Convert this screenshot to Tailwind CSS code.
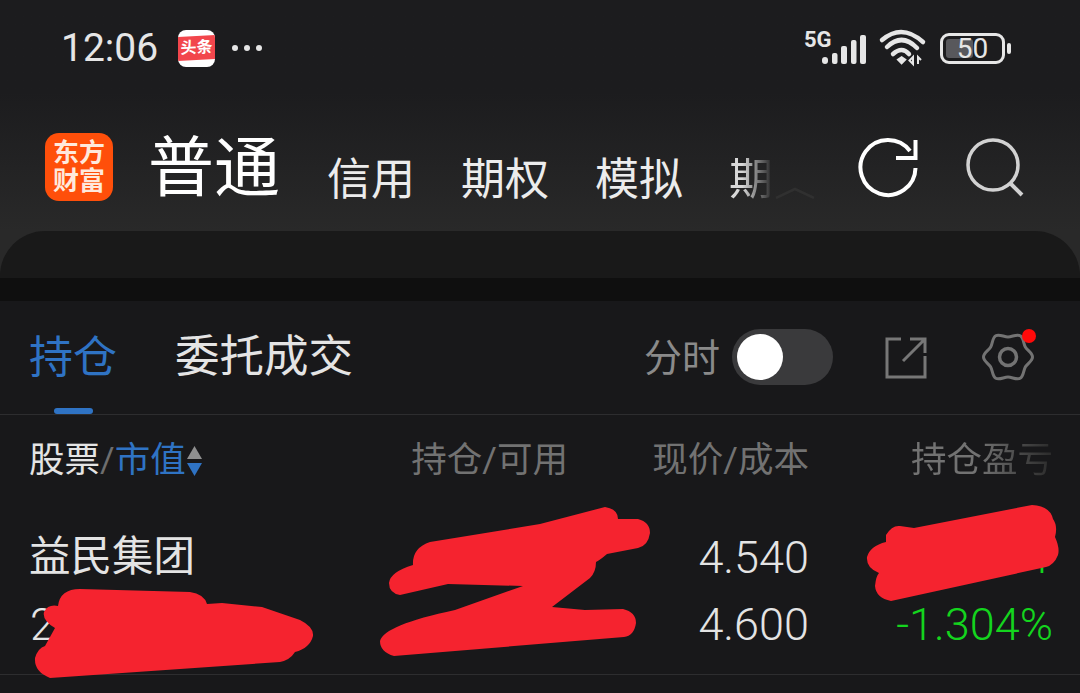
<!DOCTYPE html>
<html lang="zh-CN">
<head>
    <meta charset="UTF-8">
    <meta name="viewport" content="width=device-width, initial-scale=1.0">
    <title>持仓</title>
    <script src="https://cdn.jsdelivr.net/npm/@tailwindcss/browser@4"></script>
</head>
<body class="bg-[#18181a]">
<div class="relative w-[1080px] h-[693px] overflow-hidden bg-[#18181a] font-['Roboto','Noto_Sans_CJK_SC',sans-serif]">

    <!-- top -->
    <header class="h-[231px] bg-gradient-to-b from-[#1c1c1e] from-40% to-[#292929]">
        <div class="h-[96px] pl-[61px] pr-[69px] flex items-center justify-between">
            <div class="flex items-center">
                <span class="text-[39px] leading-none text-[#e6e6e6] w-[117px]">12:06</span>
                <div class="w-[37px] h-[37px] rounded-[8px] bg-white flex items-center justify-center overflow-hidden">
                    <div class="w-full h-[24px] bg-[#f2464c] -skew-y-3 text-white text-[16px] font-bold leading-[24px] text-center">头条</div>
                </div>
                <div class="flex gap-[6px] ml-[17px]">
                    <span class="w-[6px] h-[6px] rounded-full bg-[#e6e6e6]"></span>
                    <span class="w-[6px] h-[6px] rounded-full bg-[#e6e6e6]"></span>
                    <span class="w-[6px] h-[6px] rounded-full bg-[#e6e6e6]"></span>
                </div>
            </div>
            <div class="flex items-center">
                <div class="relative w-[61px] h-[34px]">
                    <span class="absolute -left-[1px] -top-[1px] text-[22px] leading-[20px] font-bold text-[#e6e6e6]">5G</span>
                    <svg class="absolute left-0 top-0" width="61" height="34" viewBox="0 0 61 34" fill="#e6e6e6">
                        <rect x="17" y="26" width="6" height="7" rx="3"/>
                        <rect x="27" y="22" width="5.5" height="11" rx="2"/>
                        <rect x="36" y="15" width="6" height="18" rx="2"/>
                        <rect x="46" y="9" width="5.5" height="24" rx="2"/>
                        <rect x="55" y="4" width="6" height="29" rx="2"/>
                    </svg>
                </div>
                <svg class="ml-[11px] overflow-visible" width="48" height="36" viewBox="0 0 48 36" fill="none" stroke="#e6e6e6" stroke-width="4.5" stroke-linecap="round">
                    <path d="M5 10 Q25 -7 46 12"/>
                    <path d="M10 17 Q25 2.5 40 18"/>
                    <path d="M16 24 Q25 16 32 24"/>
                    <path d="M24.6 27 L28.6 29.6 L24.6 33.6 L20.6 29.6 Z" fill="#e6e6e6" stroke-width="1.5"/>
                    <path d="M36 27 v7 l-3.5 -3.5 z M41 34 v-7 l3 3" stroke-width="2" stroke-linecap="butt"/>
                </svg>
                <div class="ml-[15px] relative w-[65px] h-[31px] border-[3px] border-[#e6e6e6] rounded-[9px] p-[3px]">
                    <div class="w-[27px] h-full rounded-[3px] bg-[#58585c]"></div>
                    <span class="absolute inset-0 text-center text-[28px] leading-[25px] text-[#e6e6e6]">50</span>
                </div>
                <span class="ml-[2px] w-[4px] h-[11px] rounded-[2px] bg-[#e6e6e6]"></span>
            </div>
        </div>

        <nav class="relative mt-[32px] h-[78px] pl-[45px] flex items-center text-white">
            <div class="w-[68px] h-[68px] rounded-[14px] bg-[#ff4f0a] text-[#ffe9dc] text-[26px] font-bold leading-[28px] text-center pt-[6px]">东方<br>财富</div>
            <span class="ml-[35px] mt-[3px] text-[66px] leading-none">普通</span>
            <div class="flex items-end self-end -mb-[2px] text-[44px] leading-[56px] text-[#ececec]">
                <span class="ml-[47px]">信用</span>
                <span class="ml-[46px]">期权</span>
                <span class="ml-[46px]">模拟</span>
                <span class="ml-[46px] bg-gradient-to-r from-[#d8d8d8] to-transparent from-30% bg-clip-text text-transparent w-[44px]">期</span>
                <svg class="mb-[9px] ml-[2px]" width="40" height="12" viewBox="0 0 40 12" fill="none" stroke="#303030" stroke-width="2.5"><path d="M1 11 L20 2 L39 11"/></svg>
            </div>
            <svg class="absolute left-[857px] top-[9px]" width="62" height="62" viewBox="0 0 62 62" fill="none" stroke="#fff" stroke-width="4">
                <path d="M58.5 31 A27.5 27.5 0 1 1 53 14"/>
                <path d="M39 21 H58.5 V3"/>
            </svg>
            <svg class="absolute left-[964px] top-[9px]" width="62" height="62" viewBox="0 0 62 62" fill="none" stroke="#d2d2d2" stroke-width="3.5">
                <circle cx="29" cy="28" r="25"/>
                <path d="M46 46 L58 58" stroke-width="4"/>
            </svg>
        </nav>
    </header>

    <!-- empty card -->
    <div class="h-[47px] bg-[#292929]">
        <div class="h-full rounded-t-[45px] bg-[#191919]"></div>
    </div>
    <div class="h-[23px] bg-[#0f0f0f]"></div>

    <!-- holdings -->
    <section>
        <div class="h-[114px] pl-[29px] flex items-center border-b border-[#2d2d2f] relative">
            <span class="text-[44px] leading-none text-[#2f73c4]">持仓</span>
            <span class="ml-[58px] text-[44.5px] leading-none text-[#e4e4e4]">委托成交</span>
            <span class="absolute left-[54px] bottom-0 w-[39px] h-[6px] rounded-full bg-[#2f73c4]"></span>

            <span class="ml-[291px] text-[38px] leading-none text-[#8a8a8a]">分时</span>
            <div class="ml-[12px] mb-[2px] w-[101px] h-[56px] rounded-full bg-[#3a3a3c] p-[5px]">
                <div class="w-[46px] h-[46px] rounded-full bg-white"></div>
            </div>
            <svg class="ml-[51px]" width="44" height="44" viewBox="0 0 44 44" fill="none" stroke="#777" stroke-width="3">
                <path d="M17 3 H3 V41 H41 V20"/>
                <path d="M19 25 L41 3 M26 3 H41 V17"/>
            </svg>
            <div class="relative ml-[54px] mb-[2px] w-[52px] h-[52px]">
                <svg width="52" height="52" viewBox="0 0 52 52" fill="none" stroke="#737373" stroke-width="3">
                    <path d="M50.5 26 C50.5 30 45.32 32.54 43.32 36 S41.71 45.22 38.25 47.22 S30 46 26 46 S17.21 49.22 13.75 47.22 S10.68 39.46 8.68 36 S1.5 30 1.5 26 S6.68 19.46 8.68 16 S10.29 6.78 13.75 4.78 S22 6 26 6 S34.79 2.78 38.25 4.78 S41.32 12.54 43.32 16 S50.5 22 50.5 26 Z"/>
                    <circle cx="26" cy="26" r="8.5" stroke-width="3.5"/>
                </svg>
                <span class="absolute -right-[2px] -top-[2px] w-[14px] h-[14px] rounded-full bg-[#ff0a0a]"></span>
            </div>
        </div>

        <div class="grid grid-cols-[300px_238px_241px_244px] pl-[30px] pr-[27px]">
            <div class="h-[91px] -ml-[1px] flex items-center text-[35.5px] leading-none text-[#e4e4e4]">
                <span>股票</span><span class="text-[#6e6e6e]">/</span><span class="text-[#2f73c4]">市值</span>
                <svg width="17" height="32" viewBox="0 0 17 32"><path d="M8.5 1 L16 14 H1 Z" fill="#8f8f8f"/><path d="M8.5 31 L16 18 H1 Z" fill="#2f73c4"/></svg>
            </div>
            <div class="h-[91px] flex items-center justify-end text-[35.5px] leading-none text-[#727272]">持仓/可用</div>
            <div class="h-[91px] flex items-center justify-end text-[35.5px] leading-none text-[#727272]">现价/成本</div>
            <div class="h-[91px] flex items-center justify-end text-[35.5px] leading-none bg-gradient-to-r from-[#727272] from-70% to-[#2a2a2a] bg-clip-text text-transparent">持仓盈亏</div>

            <div class="-ml-[1px] text-[41.5px] leading-none text-[#e4e4e4] pt-[30px]">益民集团</div>
            <div></div>
            <div class="text-[45px] leading-none text-[#e4e4e4] text-right pt-[29px] font-light">4.540</div>
            <div class="text-[45px] leading-none text-[#14d41e] text-right pt-[29px] font-light">1</div>

            <div class="text-[45px] leading-none text-[#e4e4e4] pt-[22px] pb-[27px] font-light">2</div>
            <div></div>
            <div class="text-[45px] leading-none text-[#e4e4e4] text-right pt-[22px] pb-[27px] font-light">4.600</div>
            <div class="text-[45px] leading-none text-[#14d41e] text-right pt-[22px] pb-[27px] font-light">-1.304%</div>
        </div>
        <div class="border-b border-[#2d2d2f]"></div>
    </section>

    <!-- hand drawn redaction -->
    <svg class="absolute left-0 top-0" width="1080" height="693" viewBox="0 0 1080 693" fill="#f5232f">
        <path d="M58 606 Q60 589 80 589 L190 592 Q204 594 207 604 L222 603 L262 607 L300 620 Q314 627 313 636 Q310 648 295 652 Q290 660 280 662 L50 678 Q34 672 35 658 Q38 648 45 646 L55 628 Q42 620 44 612 Q48 604 58 606 Z"/>
        <path d="M430 542 L540 524 L605 507 Q618 509 618 519 L638 519 Q650 522 650 533 Q648 546 638 548 L607 554 Q600 560 596 562 Q596 572 590 578 L552 607 L585 610 L623 609 Q636 612 636 623 Q634 636 624 637 L394 656 Q380 652 380 641 Q384 625 455 610 L523 586 L448 584 L400 595 Q389 593 389 583 Q390 572 413 565 Q412 548 430 542 Z"/>
        <path d="M886 535 Q892 525 900 526 L914 528 L1032 505 Q1050 506 1053 519 Q1058 526 1055 537 Q1060 548 1058 555 Q1054 565 1046 567 L891 601 Q876 598 875 586 Q876 576 879 573 Q866 568 867 557 Q870 546 886 542 Z"/>
    </svg>
</div>
</body>
</html>
